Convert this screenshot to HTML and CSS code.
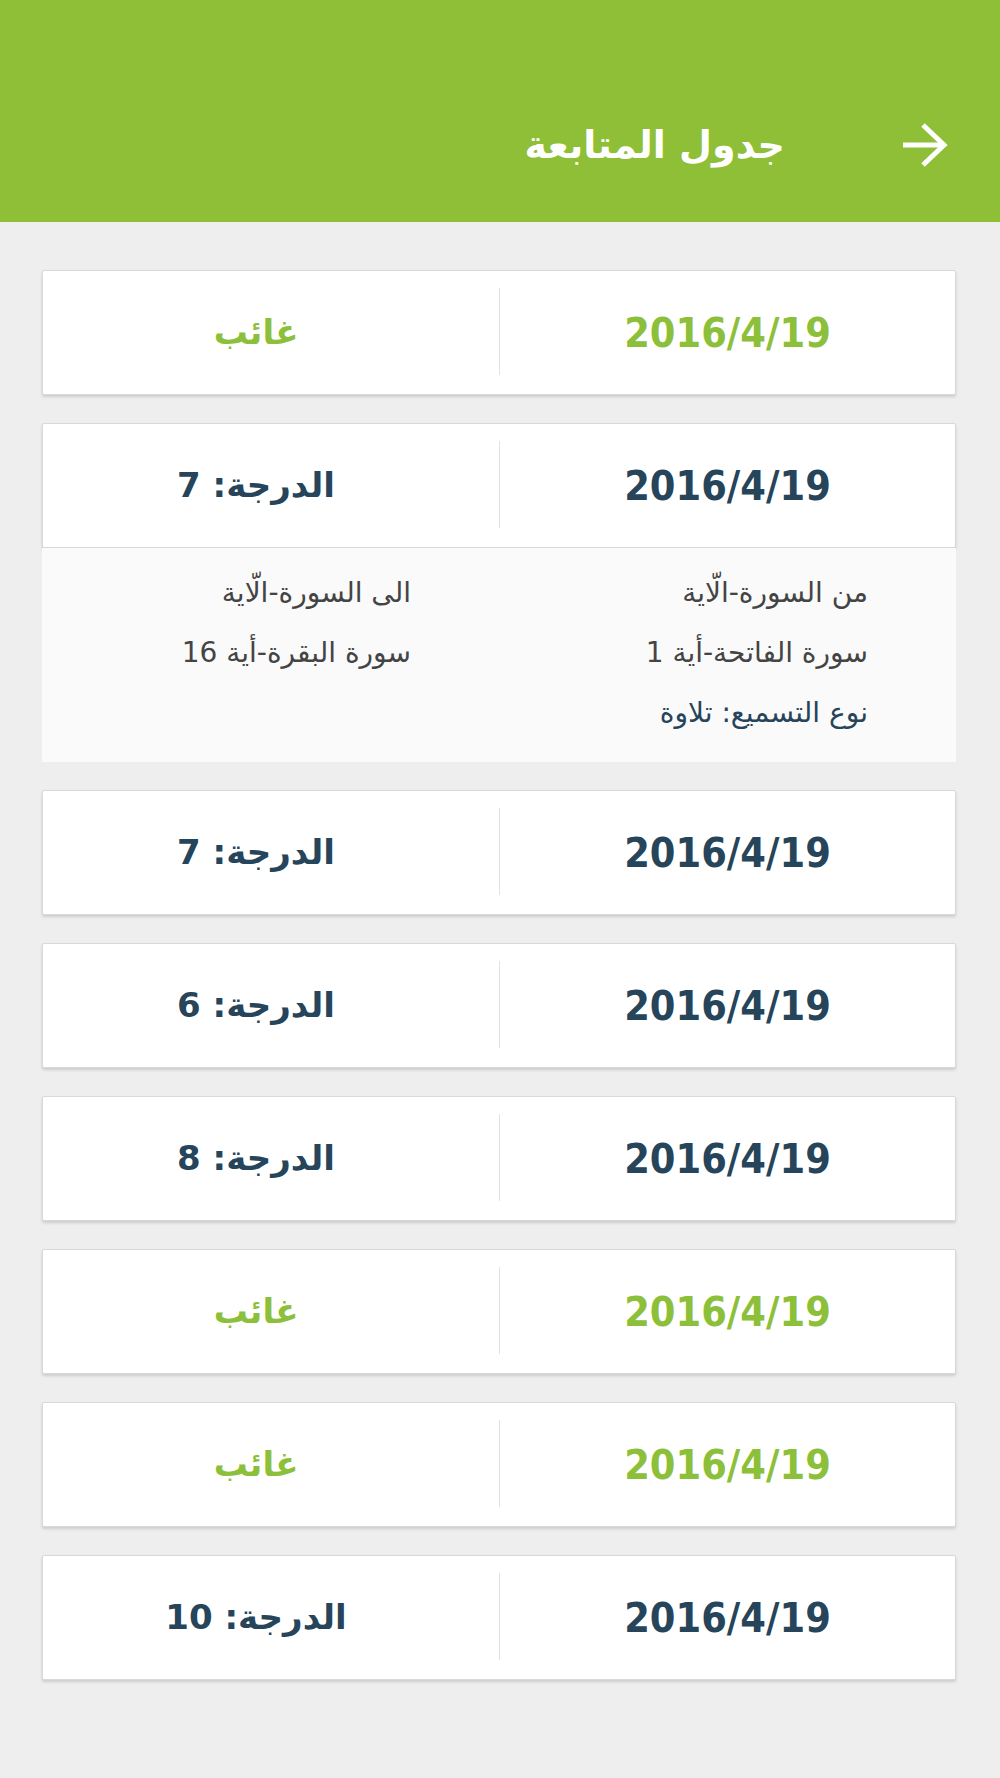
FILE: index.html
```html
<!DOCTYPE html>
<html lang="ar" dir="rtl">
<head>
  <meta charset="UTF-8" />
  <meta name="viewport" content="width=device-width, initial-scale=1.0" />
  <title>جدول المتابعة</title>
  <link rel="stylesheet" href="styles.css">
</head>
<body>
  <header class="app-bar">
    <div class="app-bar-row">
      <a href="#" class="back-btn" aria-label="رجوع">
        <svg width="46" height="44" viewBox="0 0 46 44" fill="none" stroke="#fff" stroke-width="5">
          <path d="M1 22 H42" />
          <path d="M21 2 L42 22 L21 42" stroke-linejoin="miter" />
        </svg>
      </a>
      <h1 class="page-title">جدول المتابعة</h1>
    </div>
  </header>

  <main class="records">
    <div class="record">
      <div class="record-date absent">2016/4/19</div>
      <div class="record-result absent">غائب</div>
    </div>

    <div class="record-group">
      <div class="record">
        <div class="record-date">2016/4/19</div>
        <div class="record-result">الدرجة: 7</div>
      </div>
      <div class="record-details">
        <div class="details-col">
          <p>من السورة-الّاية</p>
          <p>سورة الفاتحة-أية 1</p>
          <p class="details-type">نوع التسميع: تلاوة</p>
        </div>
        <div class="details-col">
          <p>الى السورة-الّاية</p>
          <p>سورة البقرة-أية 16</p>
        </div>
      </div>
    </div>

    <div class="record">
      <div class="record-date">2016/4/19</div>
      <div class="record-result">الدرجة: 7</div>
    </div>

    <div class="record">
      <div class="record-date">2016/4/19</div>
      <div class="record-result">الدرجة: 6</div>
    </div>

    <div class="record">
      <div class="record-date">2016/4/19</div>
      <div class="record-result">الدرجة: 8</div>
    </div>

    <div class="record">
      <div class="record-date absent">2016/4/19</div>
      <div class="record-result absent">غائب</div>
    </div>

    <div class="record">
      <div class="record-date absent">2016/4/19</div>
      <div class="record-result absent">غائب</div>
    </div>

    <div class="record">
      <div class="record-date">2016/4/19</div>
      <div class="record-result">الدرجة: 10</div>
    </div>
  </main>
</body>
</html>
```

FILE: styles.css
```css
* {
  margin: 0;
  padding: 0;
  box-sizing: border-box;
}

body {
  font-family: 'DejaVu Sans', sans-serif;
  background: #EEEEEE;
  color: #26445A;
  min-height: 100vh;
}

.app-bar {
  background: #8FBF37;
  height: 222px;
  padding: 104px 52px 0 0;
}

.app-bar-row {
  display: flex;
  align-items: center;
  height: 82px;
}

.back-btn {
  display: flex;
  width: 46px;
  height: 44px;
  margin-left: 117px;
}

.page-title {
  color: #fff;
  font-size: 38px;
  font-weight: 700;
}

.records {
  display: flex;
  flex-direction: column;
  gap: 28px;
  padding: 48px 44px 60px 42px;
}

.record {
  display: flex;
  height: 125px;
  padding: 17px 0 19px;
  background: #fff;
  border: 1px solid #D9D9D9;
  border-radius: 2px;
  box-shadow: 0 2px 3px rgba(0, 0, 0, 0.14);
}

.record-date,
.record-result {
  flex: 0 0 50%;
  display: flex;
  align-items: center;
  justify-content: center;
  font-weight: 700;
}

.record-date {
  font-family: 'DejaVu Sans Condensed', 'DejaVu Sans', sans-serif;
  font-size: 41px;
  border-left: 1px solid #E2E2E2;
  padding-top: 2px;
}

.record-result {
  font-size: 34px;
  padding-right: 30px;
}

.absent {
  color: #8CC03A;
}

.record-details {
  display: flex;
  background: #FAFAFA;
  padding: 15px 0 19px;
}

.details-col {
  flex: 0 0 50%;
  padding-right: 88px;
  font-size: 28px;
  line-height: 60px;
  color: #444;
}

.details-type {
  color: #26445A;
}
```
